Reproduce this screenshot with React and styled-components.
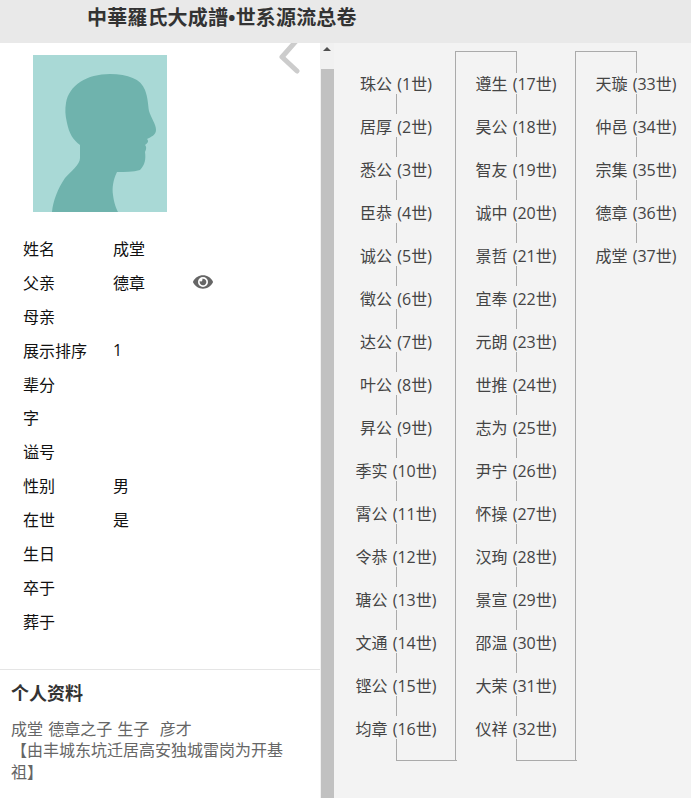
import React from 'react';
import styled, { createGlobalStyle } from 'styled-components';
import { FaEye } from 'react-icons/fa';

const GlobalStyle = createGlobalStyle`
  html, body {
    margin: 0;
    padding: 0;
    height: 100%;
    overflow: hidden;
  }
  body {
    font-family: "Open Sans", "Noto Sans CJK SC", sans-serif;
    background: #f3f3f3;
  }
`;

const Page = styled.div`
  width: 691px;
  height: 798px;
  display: flex;
  flex-direction: column;
  overflow: hidden;
`;

const Header = styled.header`
  height: 43px;
  flex: none;
  background: #e9e9e9;
  padding-left: 87px;
  display: flex;
  align-items: center;
  padding-bottom: 8px;
  box-sizing: border-box;
`;

const Title = styled.h1`
  margin: 0;
  font-size: 20px;
  font-weight: 700;
  line-height: 26px;
  letter-spacing: 0.15px;
  color: #333;
`;

const Body = styled.div`
  flex: 1;
  display: flex;
  min-height: 0;
`;

const Sidebar = styled.aside`
  width: 320px;
  flex: none;
  background: #fff;
  position: relative;
`;

const Collapse = styled.svg`
  position: absolute;
  left: 276px;
  top: 0;
  width: 26px;
  height: 32px;
`;

const Avatar = styled.svg`
  display: block;
  width: 134px;
  height: 157px;
  margin: 12px 0 19px 33px;
`;

const Fields = styled.div`
  padding: 0 0 31px 23px;
  border-bottom: 1px solid #e5e5e5;
`;

const Field = styled.div`
  height: 33.9px;
  display: flex;
  align-items: center;
  font-size: 16px;
  color: #111;
`;

const Label = styled.span`
  width: 90px;
`;

const Value = styled.span`
  width: 80px;
`;

const Eye = styled(FaEye)`
  color: #666;
  font-size: 20px;
`;

const Profile = styled.section`
  padding: 10px 30px 0 11px;
`;

const ProfileTitle = styled.h2`
  margin: 0 0 13px;
  font-size: 18px;
  font-weight: 700;
  line-height: 26px;
  color: #333;
`;

const ProfileText = styled.p`
  margin: 0;
  font-size: 16px;
  line-height: 21.5px;
  word-spacing: 1px;
  color: #666;
`;

const Scrollbar = styled.div`
  width: 14px;
  flex: none;
  background: #f1f1f1;
  display: flex;
  flex-direction: column;
  align-items: flex-end;
`;

const ScrollArrow = styled.div`
  height: 26px;
  width: 14px;
  display: flex;
  justify-content: center;
  padding-top: 4px;
  box-sizing: border-box;

  &::before {
    content: '';
    width: 0;
    height: 0;
    border-left: 4px solid transparent;
    border-right: 4px solid transparent;
    border-bottom: 4px solid #505050;
  }
`;

const ScrollThumb = styled.div`
  flex: 1;
  width: 13px;
  background: #c1c1c1;
`;

const Tree = styled.main`
  flex: 1;
  display: flex;
  align-items: flex-start;
  padding: 8px 0 0 2px;
  background: #f3f3f3;
`;

const Column = styled.div`
  width: ${({ $joined }) => ($joined ? '121px' : '120px')};
  height: 710px;
  box-sizing: border-box;
  flex: none;
  position: relative;
  padding-top: 10px;
  border-left: ${({ $joined }) => ($joined ? '1px solid #aaa' : '0')};
  margin-left: ${({ $joined }) => ($joined ? '-1px' : '0')};
`;

const TopElbow = styled.div`
  position: absolute;
  left: 0;
  top: 0;
  width: 60px;
  height: 21px;
  border-top: 1px solid #aaa;
  border-right: 1px solid #aaa;
`;

const BottomElbow = styled.div`
  position: absolute;
  left: 60px;
  top: 688px;
  width: 60px;
  height: 21px;
  border-left: 1px solid #aaa;
  border-bottom: 1px solid #aaa;
`;

const Node = styled.div`
  height: 43px;
  display: flex;
  align-items: center;
  justify-content: center;
  position: relative;
  font-size: 16px;
  word-spacing: 1px;
  color: #444;

  ${({ $line }) =>
    $line &&
    `&::after {
      content: '';
      position: absolute;
      left: 60px;
      top: 33px;
      width: 1px;
      height: 20px;
      background: #aaa;
    }`}
`;

const fields = [
  ['姓名', '成堂'],
  ['父亲', '德章', true],
  ['母亲', ''],
  ['展示排序', '1'],
  ['辈分', ''],
  ['字', ''],
  ['谥号', ''],
  ['性别', '男'],
  ['在世', '是'],
  ['生日', ''],
  ['卒于', ''],
  ['葬于', ''],
];

const generations = [
  '珠公', '居厚', '悉公', '臣恭', '诚公', '徵公', '达公', '叶公',
  '昇公', '季实', '霄公', '令恭', '瑭公', '文通', '铿公', '均章',
  '遵生', '昊公', '智友', '诚中', '景哲', '宜奉', '元朗', '世推',
  '志为', '尹宁', '怀操', '汉珣', '景宣', '邵温', '大荣', '仪祥',
  '天璇', '仲邑', '宗集', '德章', '成堂',
];

const columns = [generations.slice(0, 16), generations.slice(16, 32), generations.slice(32)];

const App = () => {
  return (
    <Page>
      <GlobalStyle />
      <Header>
        <Title>中華羅氏大成譜•世系源流总卷</Title>
      </Header>
      <Body>
        <Sidebar>
          <Collapse viewBox="0 0 26 32">
            <path d="M21 -3 L6 14 L21 28" fill="none" stroke="#ccc" strokeWidth="5" strokeLinecap="round" strokeLinejoin="round" />
          </Collapse>
          <Avatar viewBox="0 0 134 157">
            <rect width="134" height="157" fill="#a9d9d6" />
            <path
              d="M19 157 C20 146 25 133 32 123 C38 116 47 110 47 103 L47 90 C40 85 36 78 34 68 C32 60 32 54 33 48 C36 30 54 19 77 19 C95 19 108 24 112 35 C115 43 115 50 116 56 C118 63 123 69 123 75 C123 80 118 82 114 84 C116 86 115 88 112 90 C114 92 113 95 112 97 C113 104 112 110 107 115 C100 117 92 117 84 117 C80 125 79 133 80 140 C81 148 83 153 85 157 Z"
              fill="#6fb3ad"
            />
          </Avatar>
          <Fields>
            {fields.map(([label, value, viewable]) => (
              <Field key={label}>
                <Label>{label}</Label>
                <Value>{value}</Value>
                {viewable && <Eye />}
              </Field>
            ))}
          </Fields>
          <Profile>
            <ProfileTitle>个人资料</ProfileTitle>
            <ProfileText>
              成堂 德章之子 生子 &nbsp;彦才
              <br />
              【由丰城东坑迁居高安独城雷岗为开基祖】
            </ProfileText>
          </Profile>
        </Sidebar>
        <Scrollbar>
          <ScrollArrow />
          <ScrollThumb />
        </Scrollbar>
        <Tree>
          {columns.map((names, c) => (
            <Column key={c} $joined={c > 0}>
              {c > 0 && <TopElbow />}
              {c < 2 && <BottomElbow />}
              {names.map((name, i) => {
                const number = c * 16 + i + 1;
                return (
                  <Node key={number} $line={i < names.length - 1}>
                    {name} ({number}世)
                  </Node>
                );
              })}
            </Column>
          ))}
        </Tree>
      </Body>
    </Page>
  );
};

export default App;
